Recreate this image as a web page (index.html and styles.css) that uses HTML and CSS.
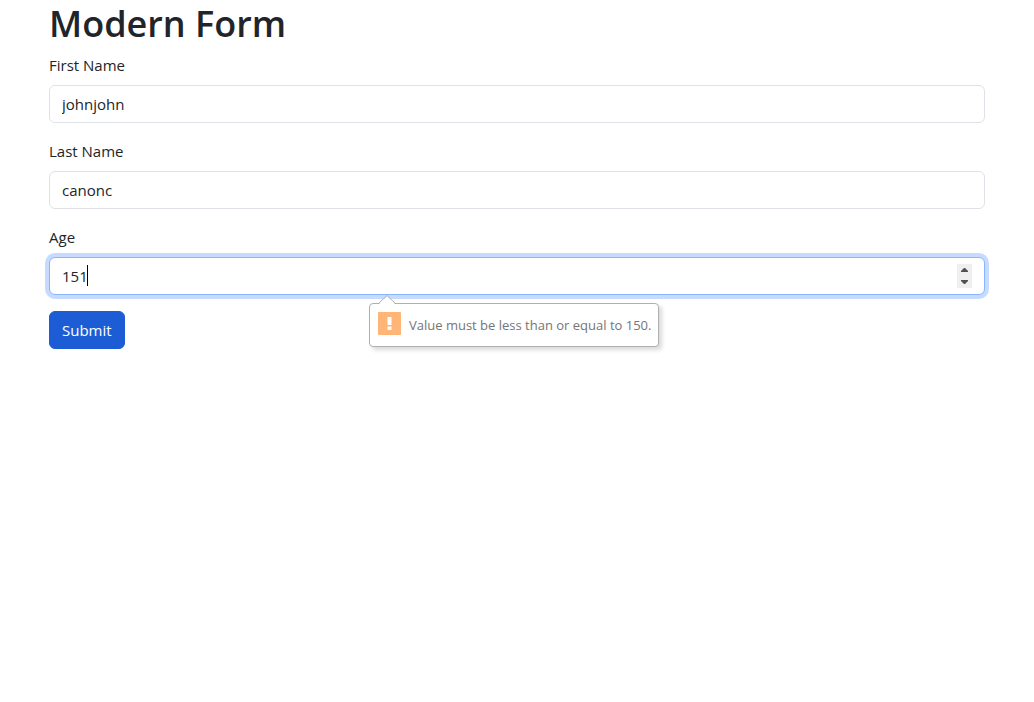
FILE: index.html
```html
<!DOCTYPE html>
<html lang="en">
<head>
<meta charset="utf-8">
<meta name="viewport" content="width=device-width, initial-scale=1">
<title>Modern Form</title>
<link rel="stylesheet" href="styles.css">
</head>
<body>
<main class="container">
  <h1 class="title">Modern Form</h1>
  <form class="form" novalidate>
    <div class="field">
      <label class="label" for="first">First Name</label>
      <input class="control" id="first" type="text" value="johnjohn">
    </div>
    <div class="field">
      <label class="label" for="last">Last Name</label>
      <input class="control" id="last" type="text" value="canonc">
    </div>
    <div class="field">
      <label class="label" for="age">Age</label>
      <div class="age">
        <input class="control control-active" id="age" type="text" inputmode="numeric" value="151">
        <span class="caret"></span>
        <div class="spinner">
          <button class="step" type="button" aria-label="Increase"><svg width="7" height="4" viewBox="0 0 7 4"><path d="M0 4V3L3 0H4L7 3V4Z" fill="#505050"/></svg></button>
          <button class="step" type="button" aria-label="Decrease"><svg width="7" height="4" viewBox="0 0 7 4"><path d="M0 0V1L3 4H4L7 1V0Z" fill="#505050"/></svg></button>
        </div>
        <div class="bubble" role="alert">
          <svg class="bubble-arrow" width="18" height="9" viewBox="0 0 18 9"><path d="M1 9L9 1L17 9Z" fill="#fff"/><path d="M0.5 8.5L9 0.5L17.5 8.5" fill="none" stroke="#b0b0b0"/></svg>
          <svg class="bubble-icon" width="23" height="23" viewBox="0 0 23 23"><rect width="23" height="23" rx="1" fill="#ffb576"/><path d="M9.5 5H13.5V13H9.5Z M9.5 14.5H13.5V18H9.5Z" fill="#fff"/></svg>
          <span class="bubble-text">Value must be less than or equal to 150.</span>
        </div>
      </div>
    </div>
    <button class="submit" type="submit">Submit</button>
  </form>
</main>
</body>
</html>
```
FILE: styles.css
```css
*, *::before, *::after { box-sizing: border-box; }
body {
  margin: 0;
  background: #fff;
  color: #212529;
  font: 16px/24px "Open Sans", "Noto Sans", sans-serif;
}
.container { margin: 0 49px; padding-bottom: 24px; }
.title { margin: 0 0 5px; font-size: 36px; line-height: 48px; font-weight: 600; }
.field { margin-bottom: 16px; }
.label { display: block; margin-bottom: 8px; font-size: 15px; }
.control {
  display: block;
  width: 100%;
  height: 38px;
  padding: 6px 12px;
  border: 1px solid #dee2e6;
  border-radius: 6px;
  background: #fff;
  color: #212529;
  font: inherit;
  font-size: 15px;
  outline: 0;
}
.control-active { border-color: #86b7fe; box-shadow: 0 0 0 4px #c7daff; }
.age { position: relative; }
.caret { position: absolute; left: 38px; top: 8px; width: 1px; height: 21px; background: #000; }
.spinner {
  position: absolute;
  right: 13px;
  top: 7px;
  width: 15px;
  height: 24px;
  display: flex;
  flex-direction: column;
  background: #efefef;
}
.step { flex: 1; display: flex; align-items: center; justify-content: center; padding: 0; border: 0; background: none; }
.bubble {
  position: absolute;
  z-index: 1;
  left: 320px;
  top: 46px;
  display: flex;
  align-items: flex-start;
  gap: 8px;
  height: 44px;
  padding: 8px 7px 8px 8px;
  border: 1px solid #b0b0b0;
  border-radius: 4px;
  background: #fff;
  box-shadow: 3px 3px 4px rgba(0, 0, 0, 0.15);
  white-space: nowrap;
}
.bubble-arrow { position: absolute; left: 8px; top: -9px; }
.bubble-icon { flex: none; }
.bubble-text { color: #757575; font-size: 13px; line-height: 26px; }
.submit {
  padding: 6px 12px;
  border: 1px solid #1c5dd6;
  border-radius: 6px;
  background: #1c5dd6;
  color: #fff;
  font: inherit;
  font-size: 15px;
  line-height: 24px;
}
```
